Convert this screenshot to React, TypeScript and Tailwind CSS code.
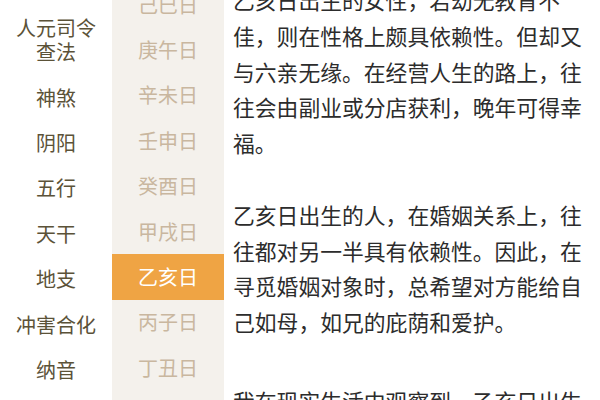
import React from "react";

const labels = ["神煞", "阴阳", "五行", "天干", "地支", "冲害合化", "纳音"];
const days = ["己巳日", "庚午日", "辛未日", "壬申日", "癸酉日", "甲戌日", "乙亥日", "丙子日", "丁丑日"];
const active = "乙亥日";

const paragraphs = [
  "乙亥日出生的女性，若幼无教育不佳，则在性格上颇具依赖性。但却又与六亲无缘。在经营人生的路上，往往会由副业或分店获利，晚年可得幸福。",
  "乙亥日出生的人，在婚姻关系上，往往都对另一半具有依赖性。因此，在寻觅婚姻对象时，总希望对方能给自己如母，如兄的庇荫和爱护。",
  "我在现实生活中观察到，乙亥日出生的人大多心地善良，待人宽厚。",
];

export default function App() {
  return (
    <div
      className="flex h-[400px] w-[600px] overflow-hidden bg-white"
      style={{ fontFamily: '"Noto Sans CJK SC", "Noto Sans", sans-serif' }}
    >
      {/* left: categories */}
      <div className="w-[112px] shrink-0 text-[20px] text-[#5b5238]">
        <div className="flex h-[75px] flex-col items-center justify-center pt-[5px] leading-[24px]">
          <span>人元司令</span>
          <span>查法</span>
        </div>
        {labels.map((l) => (
          <div key={l} className="flex h-[45.4px] items-center justify-center">
            {l}
          </div>
        ))}
      </div>

      {/* middle: days */}
      <div className="w-[112px] shrink-0 bg-[#f4f1ec]">
        <div className="-mt-[18px]">
          {days.map((d) => (
            <div
              key={d}
              className={
                d === active
                  ? "flex h-[45.4px] items-center justify-center bg-[#efa444] text-[20px] text-white"
                  : "flex h-[45.4px] items-center justify-center text-[20px] text-[#c9b79f]"
              }
            >
              {d}
            </div>
          ))}
        </div>
      </div>

      {/* right: article */}
      <div className="w-[360px] shrink-0 pl-[9px]">
        <div className="-mt-[18px] w-[350px] text-[21.8px] leading-[35.8px] text-[#2c2c2c]">
          <p className="mb-[35.8px]">{paragraphs[0]}</p>
          <p className="mb-[43px]">{paragraphs[1]}</p>
          <p>{paragraphs[2]}</p>
        </div>
      </div>
    </div>
  );
}
